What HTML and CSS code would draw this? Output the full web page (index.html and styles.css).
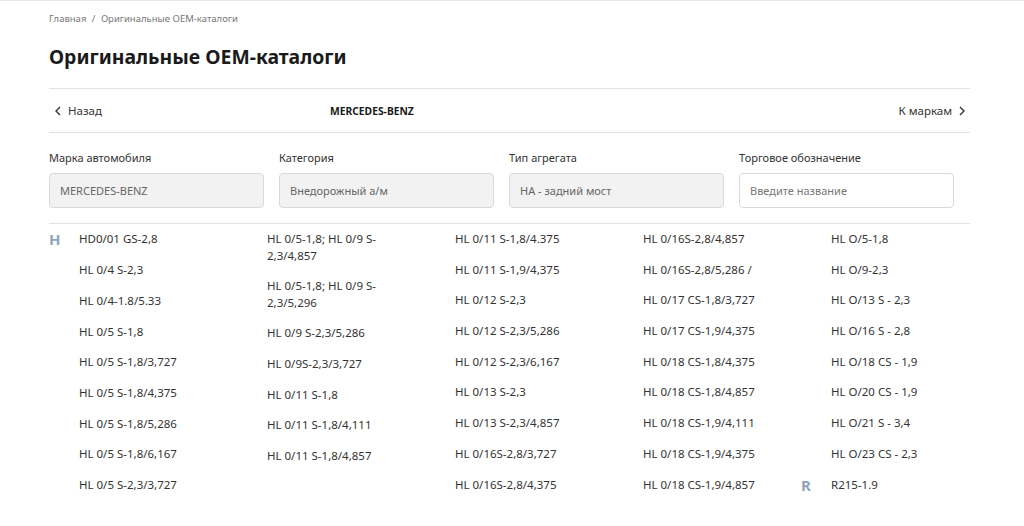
FILE: index.html
```html
<!DOCTYPE html>
<html lang="ru">
<head>
<meta charset="UTF-8">
<meta name="viewport" content="width=device-width, initial-scale=1.0">
<title>Оригинальные OEM-каталоги</title>
<link rel="stylesheet" href="styles.css">
</head>
<body>

<div class="page">
    <div class="breadcrumbs">
        <a href="#">Главная</a>
        <span class="sep">/</span>
        <span>Оригинальные OEM-каталоги</span>
    </div>

    <h1>Оригинальные OEM-каталоги</h1>

    <div class="nav-row">
        <a href="#" class="nav-back">
            <svg width="8" height="10" viewBox="0 0 8 10"><path d="M6 1 L2 5 L6 9" fill="none" stroke="#333" stroke-width="1.4"/></svg>
            Назад
        </a>
        <div class="nav-title">MERCEDES-BENZ</div>
        <a href="#" class="nav-next">
            К маркам
            <svg width="8" height="10" viewBox="0 0 8 10"><path d="M2 1 L6 5 L2 9" fill="none" stroke="#333" stroke-width="1.4"/></svg>
        </a>
    </div>

    <form class="filters">
        <div class="field">
            <label>Марка автомобиля</label>
            <div class="select">MERCEDES-BENZ</div>
        </div>
        <div class="field">
            <label>Категория</label>
            <div class="select">Внедорожный а/м</div>
        </div>
        <div class="field">
            <label>Тип агрегата</label>
            <div class="select">НА - задний мост</div>
        </div>
        <div class="field">
            <label for="trade">Торговое обозначение</label>
            <input type="text" id="trade" placeholder="Введите название">
        </div>
    </form>

    <div class="catalog">
        <ul class="col">
            <li><span class="letter">H</span><a href="#">HD0/01 GS-2,8</a></li>
            <li><span class="letter"></span><a href="#">HL 0/4 S-2,3</a></li>
            <li><span class="letter"></span><a href="#">HL 0/4-1.8/5.33</a></li>
            <li><span class="letter"></span><a href="#">HL 0/5 S-1,8</a></li>
            <li><span class="letter"></span><a href="#">HL 0/5 S-1,8/3,727</a></li>
            <li><span class="letter"></span><a href="#">HL 0/5 S-1,8/4,375</a></li>
            <li><span class="letter"></span><a href="#">HL 0/5 S-1,8/5,286</a></li>
            <li><span class="letter"></span><a href="#">HL 0/5 S-1,8/6,167</a></li>
            <li><span class="letter"></span><a href="#">HL 0/5 S-2,3/3,727</a></li>
        </ul>
        <ul class="col">
            <li><span class="letter"></span><a href="#">HL 0/5-1,8; HL 0/9 S-2,3/4,857</a></li>
            <li><span class="letter"></span><a href="#">HL 0/5-1,8; HL 0/9 S-2,3/5,296</a></li>
            <li><span class="letter"></span><a href="#">HL 0/9 S-2,3/5,286</a></li>
            <li><span class="letter"></span><a href="#">HL 0/9S-2,3/3,727</a></li>
            <li><span class="letter"></span><a href="#">HL 0/11 S-1,8</a></li>
            <li><span class="letter"></span><a href="#">HL 0/11 S-1,8/4,111</a></li>
            <li><span class="letter"></span><a href="#">HL 0/11 S-1,8/4,857</a></li>
        </ul>
        <ul class="col">
            <li><span class="letter"></span><a href="#">HL 0/11 S-1,8/4.375</a></li>
            <li><span class="letter"></span><a href="#">HL 0/11 S-1,9/4,375</a></li>
            <li><span class="letter"></span><a href="#">HL 0/12 S-2,3</a></li>
            <li><span class="letter"></span><a href="#">HL 0/12 S-2,3/5,286</a></li>
            <li><span class="letter"></span><a href="#">HL 0/12 S-2,3/6,167</a></li>
            <li><span class="letter"></span><a href="#">HL 0/13 S-2,3</a></li>
            <li><span class="letter"></span><a href="#">HL 0/13 S-2,3/4,857</a></li>
            <li><span class="letter"></span><a href="#">HL 0/16S-2,8/3,727</a></li>
            <li><span class="letter"></span><a href="#">HL 0/16S-2,8/4,375</a></li>
        </ul>
        <ul class="col">
            <li><span class="letter"></span><a href="#">HL 0/16S-2,8/4,857</a></li>
            <li><span class="letter"></span><a href="#">HL 0/16S-2,8/5,286 /</a></li>
            <li><span class="letter"></span><a href="#">HL 0/17 CS-1,8/3,727</a></li>
            <li><span class="letter"></span><a href="#">HL 0/17 CS-1,9/4,375</a></li>
            <li><span class="letter"></span><a href="#">HL 0/18 CS-1,8/4,375</a></li>
            <li><span class="letter"></span><a href="#">HL 0/18 CS-1,8/4,857</a></li>
            <li><span class="letter"></span><a href="#">HL 0/18 CS-1,9/4,111</a></li>
            <li><span class="letter"></span><a href="#">HL 0/18 CS-1,9/4,375</a></li>
            <li><span class="letter"></span><a href="#">HL 0/18 CS-1,9/4,857</a></li>
        </ul>
        <ul class="col">
            <li><span class="letter"></span><a href="#">HL O/5-1,8</a></li>
            <li><span class="letter"></span><a href="#">HL O/9-2,3</a></li>
            <li><span class="letter"></span><a href="#">HL O/13 S - 2,3</a></li>
            <li><span class="letter"></span><a href="#">HL O/16 S - 2,8</a></li>
            <li><span class="letter"></span><a href="#">HL O/18 CS - 1,9</a></li>
            <li><span class="letter"></span><a href="#">HL O/20 CS - 1,9</a></li>
            <li><span class="letter"></span><a href="#">HL O/21 S - 3,4</a></li>
            <li><span class="letter"></span><a href="#">HL O/23 CS - 2,3</a></li>
            <li><span class="letter">R</span><a href="#">R215-1.9</a></li>
        </ul>
    </div>
</div>

</body>
</html>
```

FILE: styles.css
```css
body {
    font-family: "Noto Sans", Arial, sans-serif;
    margin: 0;
    padding: 0;
    background-color: #fff;
    color: #222;
    border-top: 1px solid #e6e6e6;
}
a {
    color: inherit;
    text-decoration: none;
}
.page {
    width: 921px;
    margin-left: 49px;
}
.breadcrumbs {
    padding-top: 10px;
    font-size: 9.5px;
    line-height: 16px;
    color: #777;
}
.breadcrumbs .sep {
    margin: 0 3px;
}
h1 {
    margin: 16px 0 0;
    font-size: 19.4px;
    line-height: 28px;
    font-weight: bold;
    color: #1a1a1a;
}
.nav-row {
    display: grid;
    grid-template-columns: 281px 1fr auto;
    align-items: center;
    height: 43px;
    margin-top: 17px;
    border-top: 1px solid #e2e2e2;
    border-bottom: 1px solid #e2e2e2;
    font-size: 11.5px;
    color: #333;
}
.nav-back {
    display: flex;
    align-items: center;
    gap: 6px;
    padding-left: 5px;
}
.nav-title {
    font-size: 10.3px;
    font-weight: bold;
    color: #1a1a1a;
}
.nav-next {
    display: flex;
    align-items: center;
    gap: 6px;
    padding-right: 4px;
}
.filters {
    display: grid;
    grid-template-columns: repeat(4, 230px);
    margin: 0;
    padding: 17px 0 15px;
    border-bottom: 1px solid #e2e2e2;
}
.field label {
    display: block;
    font-size: 11px;
    line-height: 16px;
    color: #333;
    margin-bottom: 7px;
}
.select,
.field input {
    box-sizing: border-box;
    width: 215px;
    height: 35px;
    padding: 0 10px;
    border: 1px solid #d9d9d9;
    border-radius: 4px;
    background-color: #f2f2f2;
    font-family: inherit;
    font-size: 11px;
    line-height: 33px;
    color: #666;
}
.field input {
    background-color: #fff;
    outline: none;
}
.field input::placeholder {
    color: #777;
}
.catalog {
    display: grid;
    grid-template-columns: repeat(5, 188px);
    padding-top: 7px;
}
.col {
    list-style: none;
    margin: 0;
    padding: 0;
}
.col li {
    display: grid;
    grid-template-columns: 30px 1fr;
    font-size: 11.5px;
    line-height: 16.5px;
    color: #333;
    margin-bottom: 14.2px;
}
.col li a {
    padding-right: 24px;
}
.letter {
    font-size: 15px;
    font-weight: bold;
    color: #8ea4bd;
    line-height: 17px;
}
```
